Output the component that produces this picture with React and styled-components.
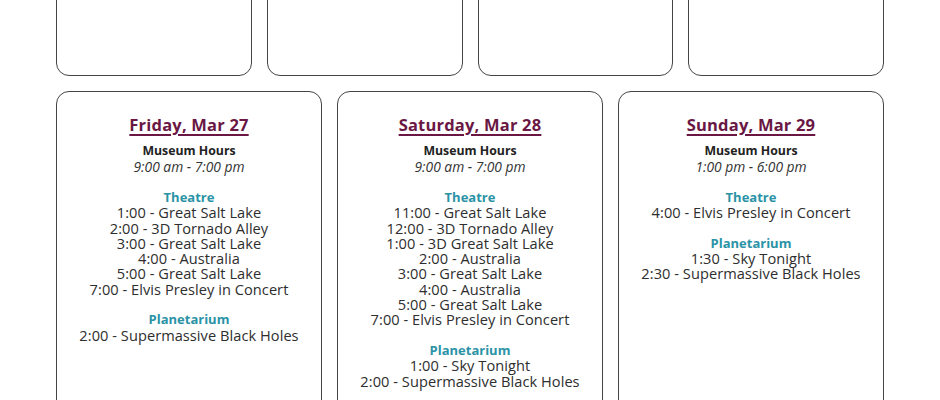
import React from "react";
import styled, { createGlobalStyle } from "styled-components";

const Global = createGlobalStyle`
  html, body {
    margin: 0;
    padding: 0;
    background: #fff;
    overflow: hidden;
  }
  body {
    font-family: "Open Sans", "Noto Sans", sans-serif;
    color: #2a2a2a;
  }
`;

const Page = styled.div`
  width: 828px;
  margin: 0 auto;
  display: flex;
  flex-direction: column;
  gap: 15px;
`;

const TopRow = styled.div`
  display: grid;
  grid-template-columns: repeat(4, 1fr);
  gap: 15px;
  margin-top: -50px;
`;

const Box = styled.div`
  height: 126px;
  border: 1.5px solid #444;
  border-radius: 13px;
  box-sizing: border-box;
`;

const DayRow = styled.div`
  display: grid;
  grid-template-columns: repeat(3, 1fr);
  gap: 15px;
`;

const DayCard = styled.div`
  height: 340px;
  border: 1.5px solid #444;
  border-radius: 13px;
  box-sizing: border-box;
  padding-top: 22px;
  display: flex;
  flex-direction: column;
  align-items: center;
  text-align: center;
`;

const DayTitle = styled.h3`
  margin: 0 0 7px;
  font-size: 16.5px;
  line-height: 22px;
  font-weight: 700;
  letter-spacing: 0.2px;
  color: #6a1744;
  text-decoration: underline;
  text-decoration-thickness: 1.5px;
  text-underline-offset: 3px;
`;

const HoursLabel = styled.div`
  font-size: 12.3px;
  line-height: 16px;
  font-weight: 700;
  color: #222;
`;

const Hours = styled.div`
  font-size: 13.8px;
  line-height: 16px;
  font-style: italic;
  color: #333;
  margin-bottom: 15px;
`;

const Section = styled.div`
  margin-bottom: 15.3px;
`;

const SectionTitle = styled.div`
  font-size: 13px;
  line-height: 15.3px;
  font-weight: 700;
  color: #2b93a6;
`;

const Show = styled.div`
  font-size: 14.6px;
  line-height: 15.3px;
  letter-spacing: 0.05px;
  color: #2e2e2e;
`;

const days = [
  {
    title: "Friday, Mar 27",
    hours: "9:00 am - 7:00 pm",
    theatre: [
      "1:00 - Great Salt Lake",
      "2:00 - 3D Tornado Alley",
      "3:00 - Great Salt Lake",
      "4:00 - Australia",
      "5:00 - Great Salt Lake",
      "7:00 - Elvis Presley in Concert",
    ],
    planetarium: ["2:00 - Supermassive Black Holes"],
  },
  {
    title: "Saturday, Mar 28",
    hours: "9:00 am - 7:00 pm",
    theatre: [
      "11:00 - Great Salt Lake",
      "12:00 - 3D Tornado Alley",
      "1:00 - 3D Great Salt Lake",
      "2:00 - Australia",
      "3:00 - Great Salt Lake",
      "4:00 - Australia",
      "5:00 - Great Salt Lake",
      "7:00 - Elvis Presley in Concert",
    ],
    planetarium: ["1:00 - Sky Tonight", "2:00 - Supermassive Black Holes"],
  },
  {
    title: "Sunday, Mar 29",
    hours: "1:00 pm - 6:00 pm",
    theatre: ["4:00 - Elvis Presley in Concert"],
    planetarium: ["1:30 - Sky Tonight", "2:30 - Supermassive Black Holes"],
  },
];

export default function App() {
  return (
    <>
      <Global />
      <Page>
        <TopRow>
          <Box />
          <Box />
          <Box />
          <Box />
        </TopRow>
        <DayRow>
          {days.map((d) => (
            <DayCard key={d.title}>
              <DayTitle>{d.title}</DayTitle>
              <HoursLabel>Museum Hours</HoursLabel>
              <Hours>{d.hours}</Hours>
              <Section>
                <SectionTitle>Theatre</SectionTitle>
                {d.theatre.map((s) => (
                  <Show key={s}>{s}</Show>
                ))}
              </Section>
              <Section>
                <SectionTitle>Planetarium</SectionTitle>
                {d.planetarium.map((s) => (
                  <Show key={s}>{s}</Show>
                ))}
              </Section>
            </DayCard>
          ))}
        </DayRow>
      </Page>
    </>
  );
}
